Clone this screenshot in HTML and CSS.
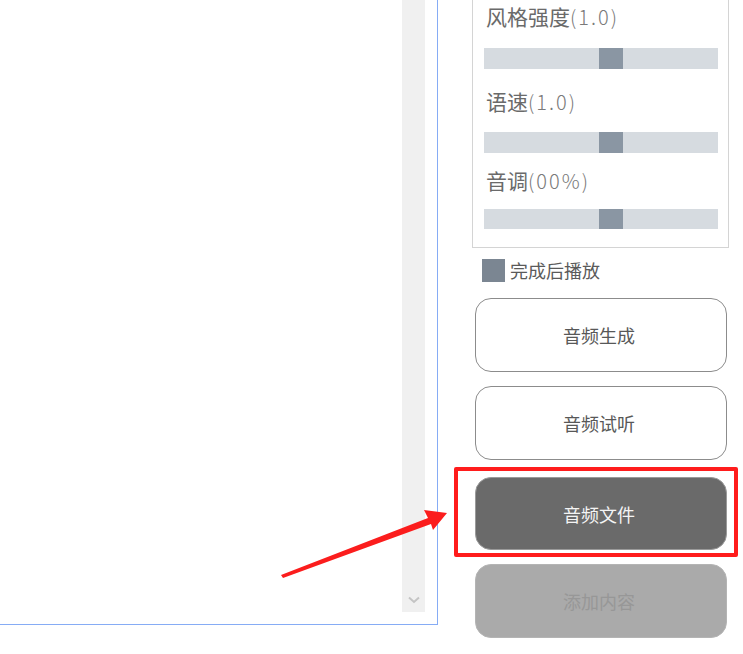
FILE: index.html
```html
<!DOCTYPE html>
<html lang="zh">
<head>
<meta charset="utf-8">
<title>音频</title>
<link rel="stylesheet" href="styles.css">
</head>
<body>
<div class="app">
  <div class="editor">
    <div class="scrollbar">
      <svg class="chev" width="12" height="8" viewBox="0 0 12 8"><polyline points="1,1.5 6,6 11,1.5" fill="none" stroke="#c4c4c4" stroke-width="2"/></svg>
    </div>
  </div>
  <div class="side">
    <div class="panel">
      <div class="label l1">风格强度<span class="val">(1.0)</span></div>
      <div class="track t1"><div class="thumb"></div></div>
      <div class="label l2">语速<span class="val">(1.0)</span></div>
      <div class="track t2"><div class="thumb"></div></div>
      <div class="label l3">音调<span class="val">(00%)</span></div>
      <div class="track t3"><div class="thumb"></div></div>
    </div>
    <div class="check-row">
      <div class="box"></div>
      <span class="check-text">完成后播放</span>
    </div>
    <div class="btn b1">音频生成</div>
    <div class="btn b2">音频试听</div>
    <div class="btn dark b3">音频文件</div>
    <div class="btn disabled b4">添加内容</div>
  </div>
</div>
<div class="highlight"></div>
<svg class="arrow" width="743" height="654" viewBox="0 0 743 654">
  <polygon points="281,575 428,518 424,510 447,513 433,530 431,524 283,578" fill="#fb1d1d"/>
</svg>
</body>
</html>
```

FILE: styles.css
```css
html, body {
  margin: 0;
  padding: 0;
  background: #ffffff;
}
body {
  width: 743px;
  height: 654px;
  overflow: hidden;
  position: relative;
  font-family: "Noto Sans CJK SC", "Noto Sans", sans-serif;
}
.app {
  display: flex;
  align-items: flex-start;
}
.editor {
  width: 425px;
  height: 624px;
  border-right: 1px solid #86acf5;
  border-bottom: 1px solid #86acf5;
  display: flex;
  justify-content: flex-end;
  padding-right: 12px;
  box-sizing: content-box;
}
.scrollbar {
  width: 23px;
  height: 612px;
  background: #f0f0f0;
  display: flex;
  flex-direction: column;
  justify-content: flex-end;
  align-items: center;
  padding-bottom: 8px;
  box-sizing: border-box;
}
.side {
  margin-left: 34px;
  display: flex;
  flex-direction: column;
}
.panel {
  width: 257px;
  box-sizing: border-box;
  border: 1px solid #d4d4d4;
  border-top: none;
  padding: 4px 10px 17px 11px;
  height: 248px;
}
.label {
  font-size: 21px;
  line-height: 24px;
  height: 24px;
  color: #6a6a6a;
  white-space: nowrap;
  padding-left: 2px;
}
.val {
  font-size: 20px;
  font-weight: 300;
  letter-spacing: 2px;
  line-height: 24px;
  color: #7a7a7a;
}
.l2 { margin-top: 20px; }
.l3 { margin-top: 15px; }
.track {
  height: 21px;
  background: #d6dbe0;
  display: flex;
}
.t1 { margin-top: 20px; }
.t2 { margin-top: 19px; }
.t3 { margin-top: 17px; height: 20px; }
.thumb {
  width: 24px;
  margin-left: 115px;
  background: #8a96a3;
}
.check-row {
  display: flex;
  align-items: center;
  margin-top: 11px;
  margin-left: 10px;
  height: 23px;
}
.box {
  width: 23px;
  height: 23px;
  background: #7b8692;
}
.check-text {
  margin-left: 5px;
  font-size: 18px;
  line-height: 23px;
  color: #5a5a5a;
}
.btn {
  margin-left: 3px;
  width: 252px;
  height: 74px;
  box-sizing: border-box;
  border: 1px solid #8c8c8c;
  border-radius: 16px;
  display: flex;
  align-items: center;
  justify-content: center;
  font-size: 18px;
  color: #585858;
  background: #ffffff;
  padding-right: 4px;
}
.b1 { margin-top: 16px; }
.b2 { margin-top: 14px; }
.b3 { margin-top: 17px; height: 73px; }
.b4 { margin-top: 14px; }
.dark {
  background: #6a6a6a;
  border-color: #9a9a9a;
  color: #f4f4f4;
}
.disabled {
  background: #aaaaaa;
  border-color: #b4b4b4;
  color: #979797;
}
.highlight {
  position: absolute;
  left: 454px;
  top: 467px;
  width: 284px;
  height: 90px;
  box-sizing: border-box;
  border: 4px solid #ff1c1c;
  border-radius: 2px;
}
.arrow {
  position: absolute;
  left: 0;
  top: 0;
  pointer-events: none;
}
```
